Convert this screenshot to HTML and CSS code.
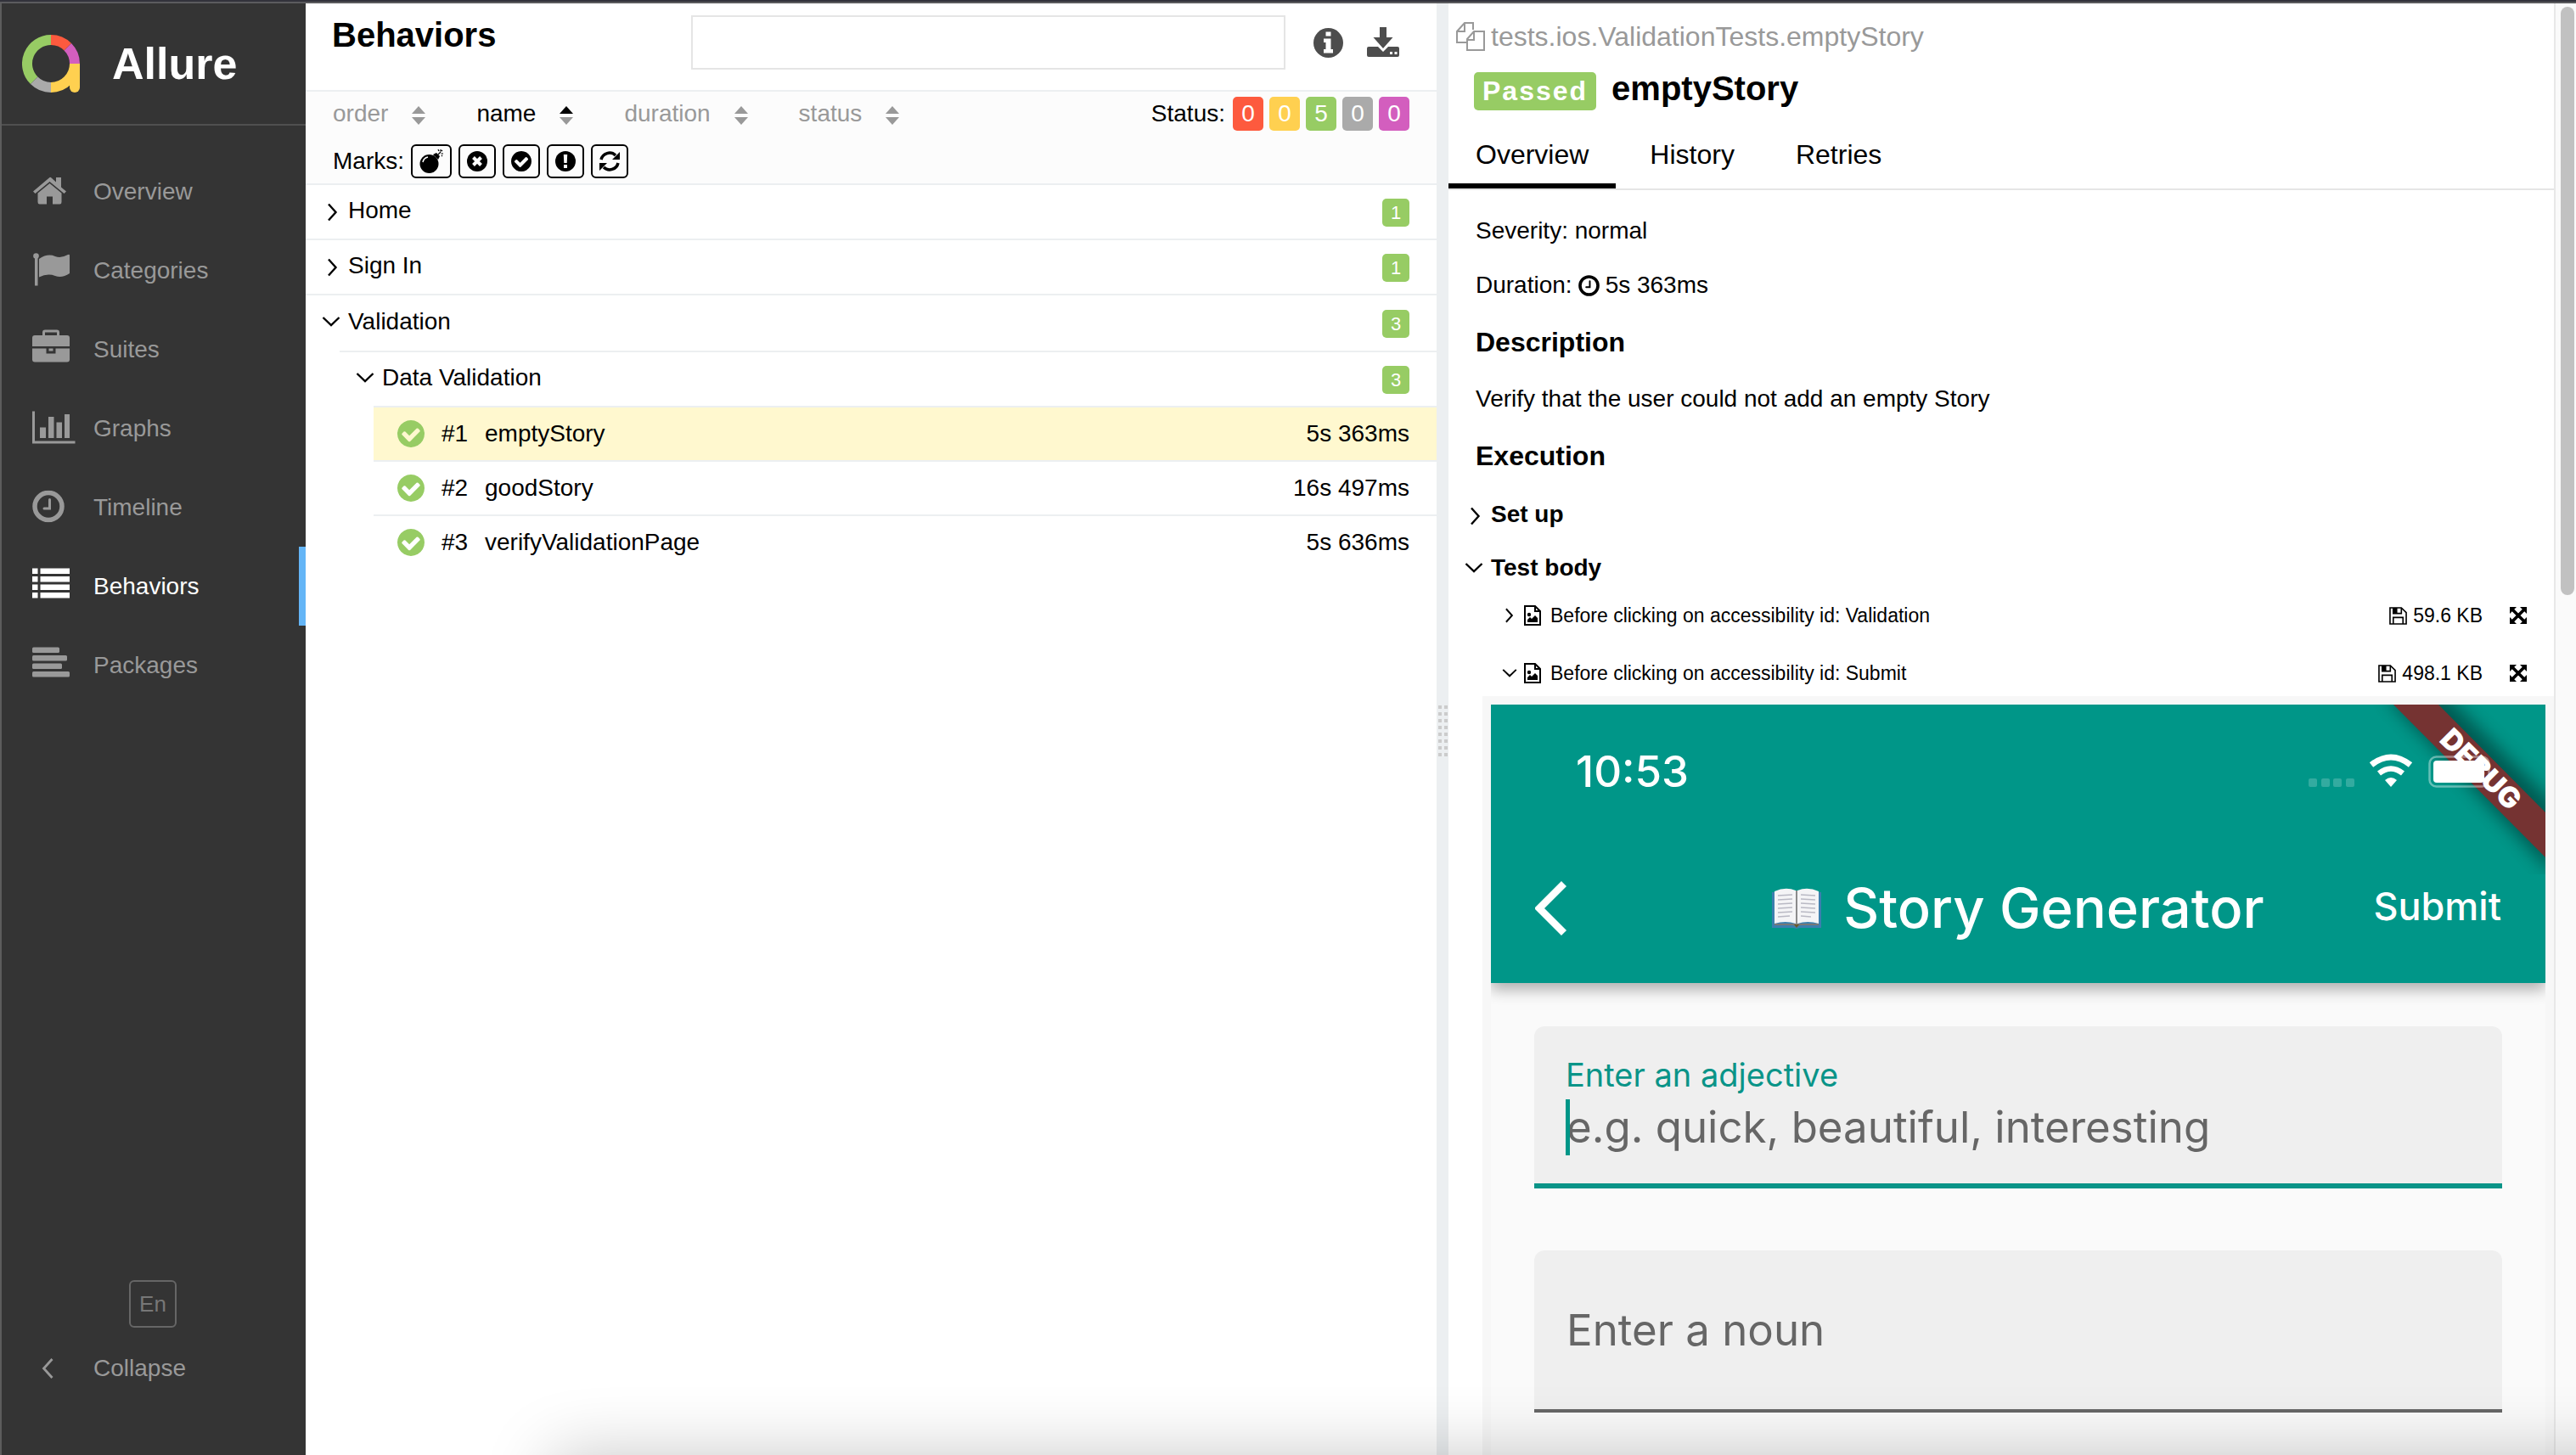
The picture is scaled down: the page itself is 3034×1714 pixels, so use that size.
FILE: index.html
```html
<!DOCTYPE html>
<html lang="en">
<head>
<meta charset="utf-8">
<title>Allure Report</title>
<link rel="stylesheet" href="styles.css">
</head>
<body>
<svg class="sprite" aria-hidden="true">
  <symbol id="right" viewBox="0 0 14 22"><path d="M2 1.500l8.500 9.500L2 20.500" fill="none" stroke="currentColor" stroke-width="2.400"/></symbol>
  <symbol id="down" viewBox="0 0 22 14"><path d="M1.500 2l9.500 9L20.500 2" fill="none" stroke="currentColor" stroke-width="2.400"/></symbol>
  <symbol id="check" viewBox="0 128 1536 1536"><path fill="currentColor" fill-rule="evenodd" d="M1284 734q0-28-18-46l-91-90q-19-19-45-19t-45 19l-408 407-226-226q-19-19-45-19t-45 19l-91 90q-18 18-18 46 0 27 18 45l362 362q19 19 45 19 27 0 46-19l543-543q18-18 18-45zM1536 896q0 209-103 385.500t-279.500 279.500-385.500 103-385.500-103-279.500-279.500-103-385.500 103-385.500 279.500-279.500 385.500-103 385.500 103 279.500 279.500 103 385.500z"/></symbol>
  <symbol id="sort" viewBox="0 0 16 22"><path class="up" d="M0 9L8 0l8 9z"/><path class="dn" d="M0 13h16l-8 9z"/></symbol>
  <symbol id="clock" viewBox="0 0 38 38"><circle cx="19" cy="19" r="16" fill="none" stroke="currentColor" stroke-width="5.500"/><path d="M20.500 11v10.500H14" fill="none" stroke="currentColor" stroke-width="3" stroke-linecap="round"/></symbol>
  <symbol id="image" viewBox="0 0 20 24"><path d="M1 1h12l6 6v16H1zM13 1v6h6" fill="none" stroke="currentColor" stroke-width="2"/><circle cx="6" cy="11" r="2.200"/><path d="M4 20v-3l3-3 2 2 4-4 3 3v5z"/></symbol>
  <symbol id="save" viewBox="0 0 22 22"><path d="M1 1h14l6 6v14H1zM5 21v-8h12v8M5 1v7h10V1" fill="none" stroke="currentColor" stroke-width="1.700"/><path d="M5 1h5v7H5z"/></symbol>
  <symbol id="expand" viewBox="0 0 20 20"><path d="M3.500 3.500l13 13M16.500 3.500l-13 13" stroke="currentColor" stroke-width="3.600"/><path d="M0 0h8L0 8zM20 0v8l-8-8zM0 20v-8l8 8zM20 20h-8l8-8z"/></symbol>
</svg>

<div class="app">
  <aside class="side">
    <a class="brand" href="#">
      <svg width="68" height="68" viewBox="0 0 68 68" stroke-width="12">
        <path d="M14.200 53.800A28 28 0 0 1 34 6" stroke="#97cc64"/>
        <path d="M34 6a28 28 0 0 1 19.800 8.200" stroke="#fd5a3e"/>
        <path d="M53.800 14.200A28 28 0 0 1 62 34" stroke="#d35ebe"/>
        <path d="M34 62a28 28 0 0 1-19.800-8.200" stroke="#aaa"/>
        <path d="M62 34a28 28 0 0 1-28 28" stroke="#ffd050"/>
        <path d="M56 34h12v28a6 6 0 0 1-12 0z" fill="#ffd050" stroke="none"/>
      </svg>
      <span>Allure</span>
    </a>
    <nav class="menu">
      <a href="#overview"><svg viewBox="0 0 52 48"><path d="M20.500 7L1 23.500l2.500 2.500L20.500 12l17 14 2.500-2.500-6-5V7h-6v5.500L22.500 7.500q-1-1-2 -.5z"/><path d="M20.500 14L6.500 25.500V36q0 2.500 2 2.500h8.500v-9h7v9h8.500q2 0 2-2.500V25.500z"/></svg>Overview</a>
      <a href="#categories"><svg viewBox="0 0 52 48"><circle cx="4.500" cy="6.500" r="3.300"/><path d="M3 8h3.500v33.500H3zM8 10q10-7 19-3 7 2.500 15-2q2-1 2 1v21q-9 6-17 3-9-3.500-19 1.500z"/></svg>Categories</a>
      <a href="#suites"><svg viewBox="0 0 52 48"><path d="M3 7h9V3.500Q12 .5 15 .5h14q3 0 3 3V7h9q3 0 3 3v10H0V10q0-3 3-3zM15 3.500V7h14V3.500z" fill-rule="evenodd"/><path d="M0 22.500h16.500v6h11v-6H44v13q0 3-3 3H3q-3 0-3-3zM19.500 22.500h5v3h-5z"/></svg>Suites</a>
      <a href="#graphs"><svg viewBox="0 0 52 48"><path d="M0 3.500h3v35h47.500v3H0zM9 22.500h7V35H9zM19 10h6.500v25H19zM28.500 16.500H35V35h-6.500zM38 7h6v28h-6z"/></svg>Graphs</a>
      <a href="#timeline"><svg viewBox="0 0 52 48"><use href="#clock" y="3.500" width="38" height="38"/></svg>Timeline</a>
      <a href="#behaviors" class="on"><svg viewBox="0 0 52 48"><path d="M0 2.500h6.500V9H0zM9.500 2.500H44V9H9.500zM0 12h6.500v6.500H0zM9.500 12H44v6.500H9.500zM0 21.500h6.500V28H0zM9.500 21.500H44V28H9.500zM0 31h6.500v6.500H0zM9.500 31H44v6.500H9.500z"/></svg>Behaviors</a>
      <a href="#packages"><svg viewBox="0 0 52 48"><rect y="2.500" width="32" height="6.500" rx="1.500"/><rect y="12" width="41" height="6.500" rx="1.500"/><rect y="21.500" width="35" height="6.500" rx="1.500"/><rect y="31" width="44" height="6.500" rx="1.500"/></svg>Packages</a>
    </nav>
    <div class="side-foot">
      <button class="lang" type="button">En</button>
      <button class="collapse" type="button"><svg viewBox="0 0 14 24"><path d="M12.500 1L2.500 12l10 11" fill="none" stroke="currentColor" stroke-width="2.800"/></svg>Collapse</button>
    </div>
  </aside>

  <main class="tree">
    <header class="tree-head">
      <h1>Behaviors</h1>
      <input class="search" type="text" aria-label="Search">
      <button class="tool" type="button" aria-label="Info"><svg width="35" height="35" viewBox="0 0 35 35"><circle cx="17.500" cy="17.500" r="17.500"/><path d="M14.500 4.500h6v5h-6zM12 12.500h8.500V25H23v4.500H12V25h2.500v-8H12z" fill="#fff"/></svg></button>
      <button class="tool" type="button" aria-label="Download"><svg width="38" height="36" viewBox="0 0 38 36"><path d="M15 0h8v12h7.500L19 25 7.500 12H15z"/><path d="M2 23h11l6 6 6-6h11q2 0 2 2v8q0 2-2 2H2q-2 0-2-2v-8q0-2 2-2z"/><path d="M27 29h3v3h-3zM32.500 29h3v3h-3z" fill="#fff"/></svg></button>
    </header>

    <section class="filters">
      <div class="line">
        <div class="sorts">
          <button type="button">order<svg><use href="#sort"/></svg></button>
          <button type="button" class="on">name<svg><use href="#sort"/></svg></button>
          <button type="button">duration<svg><use href="#sort"/></svg></button>
          <button type="button">status<svg><use href="#sort"/></svg></button>
        </div>
        <div class="statuses"><span>Status:</span>
          <button type="button" class="failed">0</button><button type="button" class="broken">0</button><button type="button" class="passed">5</button><button type="button" class="skipped">0</button><button type="button" class="unknown">0</button>
        </div>
      </div>
      <div class="marks">Marks:
        <button type="button" class="wide" aria-label="Flaky"><svg width="28" height="28" viewBox="0 0 28 28"><circle cx="11.500" cy="17" r="11"/><path d="M16 6l4-2 4 4-2 4z"/><path d="M22 6l3-3M25 0v2.500M28 5h-2.500M22 0l1 2M27 1l-1 1M27 8l-1-1" stroke="currentColor" stroke-width="1.200"/><path d="M4 15q1-5 6-6" fill="none" stroke="#fff" stroke-width="1.500"/></svg></button>
        <button type="button" aria-label="New failed"><svg width="24" height="24" viewBox="0 0 24 24"><circle cx="12" cy="12" r="12"/><path d="M7.500 7.500l9 9M16.500 7.500l-9 9" stroke="#fff" stroke-width="4"/></svg></button>
        <button type="button" aria-label="New passed"><svg width="24" height="24"><use href="#check"/></svg></button>
        <button type="button" aria-label="New broken"><svg width="24" height="24" viewBox="0 0 24 24"><circle cx="12" cy="12" r="12"/><path d="M9.800 4h4.400l-.5 10h-3.400zM10 16h4v4h-4z" fill="#fff"/></svg></button>
        <button type="button" aria-label="Retries"><svg width="24" height="24" viewBox="0 0 24 24"><path d="M2 10A10.200 10.200 0 0 1 19 5M22 14A10.200 10.200 0 0 1 5 19" fill="none" stroke="currentColor" stroke-width="3.500"/><path d="M24 1v9h-9zM0 23v-9h9z"/></svg></button>
      </div>
    </section>

    <div class="groups">
      <a class="group" href="#home"><svg class="chev"><use href="#right"/></svg>Home<span class="count">1</span></a>
      <a class="group" href="#signin"><svg class="chev"><use href="#right"/></svg>Sign In<span class="count">1</span></a>
      <a class="group open" href="#validation"><svg class="chev open"><use href="#down"/></svg>Validation<span class="count">3</span></a>
      <div class="nested">
        <a class="group" href="#data"><svg class="chev open"><use href="#down"/></svg>Data Validation<span class="count">3</span></a>
        <div class="leaves">
          <a class="leaf on" href="#t1"><svg><use href="#check"/></svg><span class="num">#1</span>emptyStory<span class="time">5s 363ms</span></a>
          <a class="leaf" href="#t2"><svg><use href="#check"/></svg><span class="num">#2</span>goodStory<span class="time">16s 497ms</span></a>
          <a class="leaf" href="#t3"><svg><use href="#check"/></svg><span class="num">#3</span>verifyValidationPage<span class="time">5s 636ms</span></a>
        </div>
      </div>
    </div>
  </main>

  <div class="gutter"><span class="grip"></span></div>

  <section class="detail">
    <div class="scroll">
      <div class="path"><svg width="34" height="34" viewBox="0 0 34 34"><path d="M12 24H1V11L10 1h10v8M10 1v10H1M13 20l8-9h12v22H13zM21 11v10h-8" fill="none" stroke="currentColor" stroke-width="2"/></svg>tests.ios.ValidationTests.emptyStory</div>
      <div class="title"><span class="badge">Passed</span><h2>emptyStory</h2></div>
      <nav class="tabs"><a class="on" href="#o">Overview</a><a href="#h">History</a><a href="#r">Retries</a></nav>
      <div class="body">
        <p>Severity: normal</p>
        <p class="duration">Duration: <svg width="25" height="25"><use href="#clock"/></svg> 5s 363ms</p>
        <h3>Description</h3>
        <p class="text">Verify that the user could not add an empty Story</p>
        <h3>Execution</h3>
        <a class="stage" href="#setup"><svg class="chev"><use href="#right"/></svg>Set up</a>
        <a class="stage next" href="#body"><svg class="chev open"><use href="#down"/></svg>Test body</a>
        <div class="steps">
          <a class="step" href="#s1"><svg class="chev"><use href="#right"/></svg><svg class="pic"><use href="#image"/></svg>Before clicking on accessibility id: Validation<span class="size"><svg class="disk"><use href="#save"/></svg>59.6 KB<svg class="full"><use href="#expand"/></svg></span></a>
          <a class="step" href="#s2"><svg class="chev open"><use href="#down"/></svg><svg class="pic"><use href="#image"/></svg>Before clicking on accessibility id: Submit<span class="size"><svg class="disk"><use href="#save"/></svg>498.1 KB<svg class="full"><use href="#expand"/></svg></span></a>
        </div>
      </div>
      <div class="attachment">
        <div class="phone">
          <div class="appbar">
            <div class="clock">10:53</div>
            <div class="navrow">
              <svg class="back" viewBox="0 0 38 64"><path d="M34 3L5 32l29 29" fill="none" stroke="#fff" stroke-width="8.500"/></svg>
              <div class="name"><svg width="58" height="48" viewBox="0 0 58 48"><path d="M0 5h58v42H33l-4 1-4-1H0z" fill="#3c7fae"/><path d="M3 42h52v2H33l-4 2-4-2H3z" fill="#777"/><path d="M3 4q13-6 25-1v39q-12-4-25 0z" fill="#f4f4f6"/><path d="M30 3q12-5 25 1v38q-13-4-25 0z" fill="#f4f4f6"/><path d="M28 3h2v40h-2z" fill="#8b8b8b"/><path d="M7 9l17-1M7 14l17-1M7 19l17-1M7 24l17-1M7 29l17-1M7 34l14-1M34 8l17 1M34 13l17 1M34 18l17 1M34 23l17 1M34 28l17 1M34 33l12 1" stroke="#b9b9c4" stroke-width="1.500"/><path d="M26 43h6l-3 4z" fill="#6b5a2a"/></svg>Story Generator</div>
              <div class="submit">Submit</div>
            </div>
            <svg class="corner" width="300" height="200" viewBox="0 0 300 200">
              <defs><filter id="soft" x="-20%" y="-20%" width="140%" height="140%"><feGaussianBlur stdDeviation="10"/></filter></defs>
              <path d="M111 -10H184L310 117V200z" fill="#000" opacity=".4" filter="url(#soft)"/>
              <path d="M121 0h53L300 127v53z" fill="#753332"/>
              <text x="224" y="88" transform="rotate(45 224 76)" text-anchor="middle">DEBUG</text>
              <g fill="#fff" opacity=".2"><rect x="21" y="87" width="10" height="10" rx="2"/><rect x="36" y="87" width="10" height="10" rx="2"/><rect x="50" y="87" width="10" height="10" rx="2"/><rect x="65" y="87" width="10" height="10" rx="2"/></g>
              <g fill="none" stroke="#fff"><path d="M95 71q23-18 46 0" stroke-width="7"/><path d="M104 81q14-11 28 0" stroke-width="6.500"/></g>
              <path d="M111 89q7-6 14 0l-7 8z" fill="#fff"/>
              <rect x="163.500" y="61.500" width="70" height="35" rx="8" fill="none" stroke="#fff" stroke-width="2.500" opacity=".4"/>
              <rect x="168" y="66" width="60" height="26" rx="4" fill="#fff"/>
            </svg>
          </div>
          <div class="form">
            <label class="field focus"><span>Enter an adjective</span><input type="text" placeholder="e.g. quick, beautiful, interesting"></label>
            <label class="field"><input type="text" placeholder="Enter a noun"></label>
          </div>
        </div>
      </div>
    </div>
    <div class="bar"><span></span></div>
  </section>
</div>
<div class="shade"></div>
</body>
</html>
```
FILE: styles.css
```css
* { box-sizing: border-box; }
body {
  margin: 0;
  height: 100vh;
  overflow: hidden;
  display: flex;
  flex-direction: column;
  border-top: 2px solid #33333b;
  font: 28px/40px "Liberation Sans", Arial, sans-serif;
  color: #000;
  background: #fff;
}
h1, h2, h3, p { margin: 0; }
a { color: inherit; text-decoration: none; }
button {
  font: inherit;
  color: inherit;
  background: none;
  border: 0;
  padding: 0;
}
svg { flex: none; fill: currentColor; }
.sprite { position: absolute; width: 0; height: 0; }
.app {
  flex: 1;
  min-height: 0;
  display: flex;
  border-top: 2px solid #5b5b5e;
}

/* sidebar */
.side {
  flex: none;
  width: 360px;
  display: flex;
  flex-direction: column;
  background: #343434;
  border-left: 2px solid #5c5c5c;
  color: #999;
}
.brand {
  display: flex;
  align-items: center;
  gap: 38px;
  height: 144px;
  padding-left: 24px;
  border-bottom: 2px solid #505050;
  color: #fff;
  font-size: 52px;
  font-weight: bold;
}
.brand svg { fill: none; }
.menu { padding-top: 31px; }
.menu a {
  display: flex;
  align-items: center;
  gap: 20px;
  height: 93px;
  padding-left: 36px;
}
.menu svg { width: 52px; height: 48px; }
.menu .on { color: #fff; border-right: 8px solid #64b5f6; }
.side-foot { margin-top: auto; padding-bottom: 82px; }
.lang {
  display: block;
  width: 56px;
  height: 56px;
  margin: 0 auto 28px 150px;
  border: 2px solid #666;
  border-radius: 6px;
  color: #777;
  font-size: 26px;
}
.collapse { display: flex; align-items: center; gap: 47px; padding-left: 47px; }
.collapse svg { width: 14px; height: 24px; }

/* tree */
.tree { flex: 1332 1 0; min-width: 0; }
.tree-head {
  display: flex;
  align-items: flex-start;
  height: 104px;
  padding: 14px 44px 0 31px;
  border-bottom: 2px solid #eceff1;
}
h1 { flex: 1; font-size: 40px; line-height: 46px; }
.search { width: 700px; height: 64px; border: 2px solid #e5e5e5; }
.tool { height: 64px; display: flex; align-items: center; color: #4d4d4d; margin-left: 33px; }
.tool + .tool { margin-left: 28px; }
.filters {
  height: 110px;
  padding: 6px 32px 0;
  background: #fcfcfc;
  border-bottom: 2px solid #eceff1;
}
.line { display: flex; justify-content: space-between; }
.sorts { display: flex; gap: 60px; color: #999; }
.sorts button { display: flex; align-items: center; gap: 28px; }
.sorts svg { width: 16px; height: 22px; margin-top: 4px; }
.sorts .on { color: #000; }
.dn { fill: #999; }
.statuses { display: flex; gap: 7px; }
.statuses span { margin-right: 2px; }
.statuses button { width: 36px; height: 40px; border-radius: 5px; color: #fff; }
.failed { background: #fd5a3e; }
.broken { background: #ffd050; }
.passed { background: #97cc64; }
.skipped { background: #aaa; }
.unknown { background: #d35ebe; }
.marks { display: flex; gap: 8px; margin-top: 16px; }
.marks button {
  display: flex;
  align-items: center;
  justify-content: center;
  width: 44px;
  height: 40px;
  border: 2px solid #000;
  border-radius: 6px;
}
.marks .wide { width: 48px; }

.group {
  display: flex;
  align-items: center;
  height: 65px;
  padding: 0 32px 3px 50px;
  border-bottom: 2px solid #eceff1;
}
.chev { width: 14px; height: 22px; }
.group .chev, .stage .chev { margin: 4px 11px 0 -25px; }
.chev.open { width: 22px; height: 14px; }
.group .chev.open, .stage .chev.open { margin: 0 9px 0 -31px; }
.group.open { border-bottom: 0; }
.count {
  margin: 4px 0 0 auto;
  width: 32px;
  border-radius: 5px;
  background: #97cc64;
  color: #fff;
  font-size: 22px;
  line-height: 33px;
  text-align: center;
}
.nested { margin-left: 40px; border-top: 2px solid #eceff1; }
.nested .group { border-bottom: 0; height: 63px; }
.leaves { margin-left: 40px; }
.leaf {
  display: flex;
  align-items: center;
  height: 64px;
  padding: 0 32px 0 28px;
  border-top: 2px solid #eceff1;
}
.leaf svg { width: 32px; height: 32px; margin-right: 20px; color: #97cc64; }
.leaf.on { background: #fff8cf; }
.num { width: 51px; }
.time { margin-left: auto; }

.gutter {
  flex: none;
  width: 14px;
  padding-top: 4px;
  background: #eceff1;
  display: flex;
  align-items: center;
  justify-content: center;
}
.grip {
  width: 11px;
  height: 60px;
  background:
    linear-gradient(90deg, transparent 4px, #eceff1 4px 7px, transparent 7px),
    repeating-linear-gradient(#ccc 0 4px, #eceff1 4px 8px);
}

/* test details */
.detail { flex: 1328 1 0; min-width: 0; display: flex; }
.scroll { flex: 1; min-width: 0; overflow: hidden; }
.path {
  display: flex;
  align-items: center;
  gap: 7px;
  margin: 20px 0 19px;
  padding-left: 9px;
  height: 38px;
  font-size: 32px;
  color: #999;
}
.title { display: flex; align-items: baseline; gap: 18px; padding-left: 30px; height: 48px; }
.badge {
  padding: 0 10px;
  background: #97cc64;
  border-radius: 5px;
  color: #fff;
  font-size: 32px;
  line-height: 45px;
  font-weight: bold;
  letter-spacing: 2px;
}
h2 { font-size: 40px; line-height: 46px; }
.tabs { display: flex; gap: 8px; border-bottom: 2px solid #e5e5e5; font-size: 32px; }
.tabs a { padding: 33px 32px 14px; border-bottom: 6px solid transparent; }
.tabs .on { border-color: #000; }
.body { padding: 28px 32px 0; }
.duration { display: flex; align-items: center; gap: 7px; margin-top: 24px; }
h3 { font-size: 32px; line-height: 40px; margin: 27px 0; }
.stage { display: flex; align-items: center; margin-top: 29px; padding-left: 18px; font-weight: bold; }
.stage.next { margin-top: 23px; }
.steps { display: flex; flex-direction: column; gap: 28px; margin-top: 16px; padding-left: 57px; }
.step { display: flex; align-items: center; font-size: 23px; }
.step .chev { width: 12px; height: 18px; margin: 0 11px 0 -23px; }
.step .chev.open { width: 18px; height: 12px; margin: 0 8px 0 -26px; }
.pic { width: 20px; height: 24px; margin-right: 11px; }
.size { display: flex; align-items: center; margin-left: auto; }
.disk { width: 21px; height: 21px; margin-right: 7px; }
.full { width: 20px; height: 20px; margin-left: 32px; }

.attachment { margin: 7px 0 0 40px; padding: 10px; background: #f7f7f7; }
.phone { background: #fafafa; font-family: Inter, sans-serif; overflow: hidden; }
.appbar {
  position: relative;
  height: 328px;
  padding: 49px 52px 48px;
  background: #009688;
  color: #fff;
  box-shadow: 0 8px 16px rgba(0, 0, 0, .3);
  font-weight: 500;
}
.clock { padding-left: 48px; font-size: 51px; line-height: 60px; }
.navrow {
  display: grid;
  grid-template-columns: 1fr auto 1fr;
  align-items: center;
  height: 80px;
  margin-top: 91px;
}
.back { width: 38px; height: 64px; }
.name { display: flex; align-items: center; gap: 26px; font-size: 65px; line-height: 80px; }
.submit { padding-bottom: 4px; text-align: right; font-size: 45px; }
.corner { position: absolute; top: 0; right: 0; }
.corner text { font-size: 34px; font-weight: 900; fill: #fff; }
.form { display: grid; gap: 73px; padding: 51px 51px 100px; }
.field {
  display: flex;
  flex-direction: column;
  justify-content: center;
  gap: 5px;
  height: 191px;
  padding: 0 38px;
  background: #efefef;
  border-bottom: 4px solid #666;
  border-radius: 12px 12px 0 0;
}
.field input {
  width: 100%;
  height: 66px;
  padding: 0;
  border: 0;
  background: none;
  font: 51px/66px Inter, sans-serif;
}
.field ::placeholder { color: #666; opacity: 1; }
.field span { font-size: 38px; line-height: 48px; color: #0a9488; }
.field.focus { border-bottom: 6px solid #0a9488; padding-left: 37px; }
.field.focus input { border-left: 5px solid #009688; text-indent: -4px; }

.bar {
  flex: none;
  width: 26px;
  padding: 4px 2px 0 6px;
  background: #fafafa;
  border-left: 2px solid #e8e8e8;
}
.bar span { display: block; width: 16px; height: 693px; border-radius: 8px; background: #c1c1c1; }

/* soft shadow rising from the lower edge of the window */
.shade {
  position: fixed;
  left: 650px;
  right: -100px;
  top: 100%;
  height: 100px;
  box-shadow: 0 0 80px rgba(0, 0, 0, .22);
  pointer-events: none;
}
```
